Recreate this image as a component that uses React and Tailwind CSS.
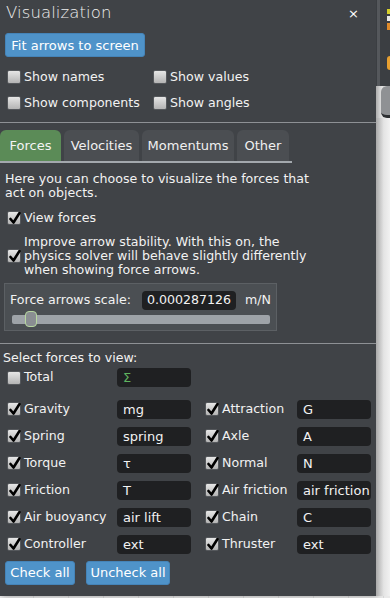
import React from "react";

const font = { fontFamily: '"DejaVu Sans", Verdana, sans-serif' };

function CB({ checked }) {
  return (
    <span className="relative w-[14px] h-[14px] rounded-[2px] border border-[#55585c] bg-gradient-to-b from-[#e6e6e6] to-[#b4b4b4] shrink-0">
      {checked && (
        <svg className="absolute left-[1px] top-[-1px]" width="12" height="14" viewBox="0 0 12 14">
          <path d="M1.5 8 L4.5 11.5 L10.5 2" fill="none" stroke="#000" strokeWidth="2.6" strokeLinecap="round" strokeLinejoin="round" />
        </svg>
      )}
    </span>
  );
}

function Check({ checked, label, className = "" }) {
  return (
    <div className={"flex items-center gap-[3px] " + className}>
      <CB checked={checked} />
      <span className="text-[12.6px] text-[#f2f2f2] leading-none whitespace-nowrap">{label}</span>
    </div>
  );
}

function Field({ value, green }) {
  return (
    <div className={"w-[74px] h-[19px] rounded-[4px] bg-[#1f2022] flex items-center px-[6px] text-[13px] leading-none whitespace-nowrap overflow-hidden " + (green ? "text-[#5fb35f]" : "text-[#f2f2f2]")}>
      {value}
    </div>
  );
}

function ForceRow({ a, av, b, bv }) {
  return (
    <div className="h-[27px] flex items-center pl-[7px]">
      <Check checked label={a} className="w-[110px]" />
      <Field value={av} />
      <Check checked label={b} className="w-[92px] ml-[14px]" />
      <Field value={bv} />
    </div>
  );
}

function Btn({ children, className = "" }) {
  return (
    <div className={"h-[24px] rounded-[3px] bg-[#4f93c9] border border-[#4584b8] flex items-center justify-center text-[13px] text-white leading-none " + className}>
      {children}
    </div>
  );
}

export default function App() {
  return (
    <div style={font} className="w-[390px] h-[598px] overflow-hidden bg-[#e9e9e9] bg-[linear-gradient(90deg,rgba(0,0,0,0.08)_1px,transparent_1px)] bg-[size:35px_35px] bg-[position:-2px_0]">
      <div className="flex h-[596px]">
        {/* Panel */}
        <div className="w-[376px] h-[596px] bg-[#404347] flex flex-col shadow-[2px_0_6px_rgba(0,0,0,0.35)]">
          {/* Title */}
          <div className="h-[26px] flex items-center justify-between pl-[6px] pr-[17px]">
            <span className="text-[16.5px] text-[#eeeeee] font-light tracking-[0.1px] leading-none">Visualization</span>
            <span className="text-[13px] text-white leading-none">×</span>
          </div>
          <div className="pl-[5px] mt-[7px]">
            <Btn className="w-[140px]">Fit arrows to screen</Btn>
          </div>
          <div className="mt-[7px] h-[26px] flex items-center pl-[7px]">
            <Check label="Show names" className="w-[146px]" />
            <Check label="Show values" />
          </div>
          <div className="h-[26px] flex items-center pl-[7px]">
            <Check label="Show components" className="w-[146px]" />
            <Check label="Show angles" />
          </div>
          <div className="mt-[6px] h-[1px] bg-[#8e9195]" />
          {/* Tabs */}
          <div className="mt-[7px] w-[292px] flex gap-[3px] border-b-2 border-[#a3a8ad]">
            <div className="w-[61px] h-[31px] rounded-t-[6px] bg-[#5b8b57] flex items-center justify-center text-[13px] text-[#f4f4f4] leading-none">Forces</div>
            <div className="w-[75px] h-[31px] rounded-t-[6px] bg-[#4b4e52] flex items-center justify-center text-[13px] text-[#f0f0f0] leading-none">Velocities</div>
            <div className="w-[92px] h-[31px] rounded-t-[6px] bg-[#4b4e52] flex items-center justify-center text-[13px] text-[#f0f0f0] leading-none">Momentums</div>
            <div className="w-[52px] h-[31px] rounded-t-[6px] bg-[#4b4e52] flex items-center justify-center text-[13px] text-[#f0f0f0] leading-none">Other</div>
          </div>
          <div className="mt-[9px] pl-[5px] text-[12.6px] leading-[13.5px] text-[#f2f2f2]">
            Here you can choose to visualize the forces that<br />act on objects.
          </div>
          <div className="mt-[12px] h-[14px] flex items-center pl-[7px]">
            <Check checked label="View forces" />
          </div>
          <div className="mt-[10px] flex items-center pl-[7px] gap-[3px]">
            <CB checked />
            <span className="text-[12.6px] leading-[14px] text-[#f2f2f2]">
              Improve arrow stability. With this on, the<br />physics solver will behave slightly differently<br />when showing force arrows.
            </span>
          </div>
          {/* scale box */}
          <div className="mt-[6px] ml-[4px] w-[273px] h-[48px] bg-[#4b4f53] border border-[#5c6064] pt-[6px] pl-[5px]">
            <div className="flex items-center h-[20px]">
              <span className="text-[12.6px] text-[#f2f2f2] leading-none w-[132px]">Force arrows scale:</span>
              <div className="w-[94px] h-[19px] rounded-[4px] bg-[#1f2022] flex items-center justify-center text-[12.6px] text-[#f2f2f2] leading-none">0.000287126</div>
              <span className="ml-[9px] text-[12.6px] text-[#f2f2f2] leading-none">m/N</span>
            </div>
            <div className="relative mt-[5px] ml-[2px] w-[258px] h-[9px] rounded-[2px] bg-[#9ea3a8]">
              <div className="absolute left-[13px] top-[-4px] w-[12px] h-[16px] rounded-[4px] bg-[#8a8e92] border-[1.5px] border-[#b7d8a0]" />
            </div>
          </div>
          <div className="mt-[12px] h-[1px] bg-[#8e9195]" />
          <div className="mt-[8px] pl-[3px] text-[12.6px] text-[#f2f2f2] leading-none">Select forces to view:</div>
          <div className="mt-[3px] h-[20px] flex items-center pl-[7px]">
            <Check label="Total" className="w-[110px]" />
            <Field value="Σ" green />
          </div>
          <div className="mt-[8px] flex flex-col">
            <ForceRow a="Gravity" av="mg" b="Attraction" bv="G" />
            <ForceRow a="Spring" av="spring" b="Axle" bv="A" />
            <ForceRow a="Torque" av="τ" b="Normal" bv="N" />
            <ForceRow a="Friction" av="T" b="Air friction" bv="air friction" />
            <ForceRow a="Air buoyancy" av="air lift" b="Chain" bv="C" />
            <ForceRow a="Controller" av="ext" b="Thruster" bv="ext" />
          </div>
          <div className="mt-[3px] pl-[5px] flex gap-[11px]">
            <Btn className="w-[70px]">Check all</Btn>
            <Btn className="w-[84px]">Uncheck all</Btn>
          </div>
        </div>
        {/* right strip */}
        <div className="w-[14px] flex flex-col">
          <div className="h-[86px] bg-[#3b3e42] flex">
            <div className="w-[3px] ml-[1px] bg-[#55585c]" />
            <div className="flex-1 flex flex-col items-end pt-[9px] gap-[2px]">
              <div className="w-[3px] h-[5px] bg-[#d6cf2a]" />
              <div className="w-[3px] h-[5px] bg-[#e8e8e8]" />
              <div className="w-[3px] h-[7px] bg-[#e08a2a]" />
              <div className="w-[3px] h-[14px] mt-[24px] rounded-l-full bg-[#e8a030]" />
            </div>
          </div>
          <div className="h-[32px] ml-[5px] rounded-l-[6px] bg-[#8f9194] border-b-[3px] border-[#2e3033]" />
          <div className="flex-1 bg-[linear-gradient(90deg,#a9a9a9,#e4e4e4_55%,#f2f2f2)]" />
        </div>
      </div>
    </div>
  );
}
